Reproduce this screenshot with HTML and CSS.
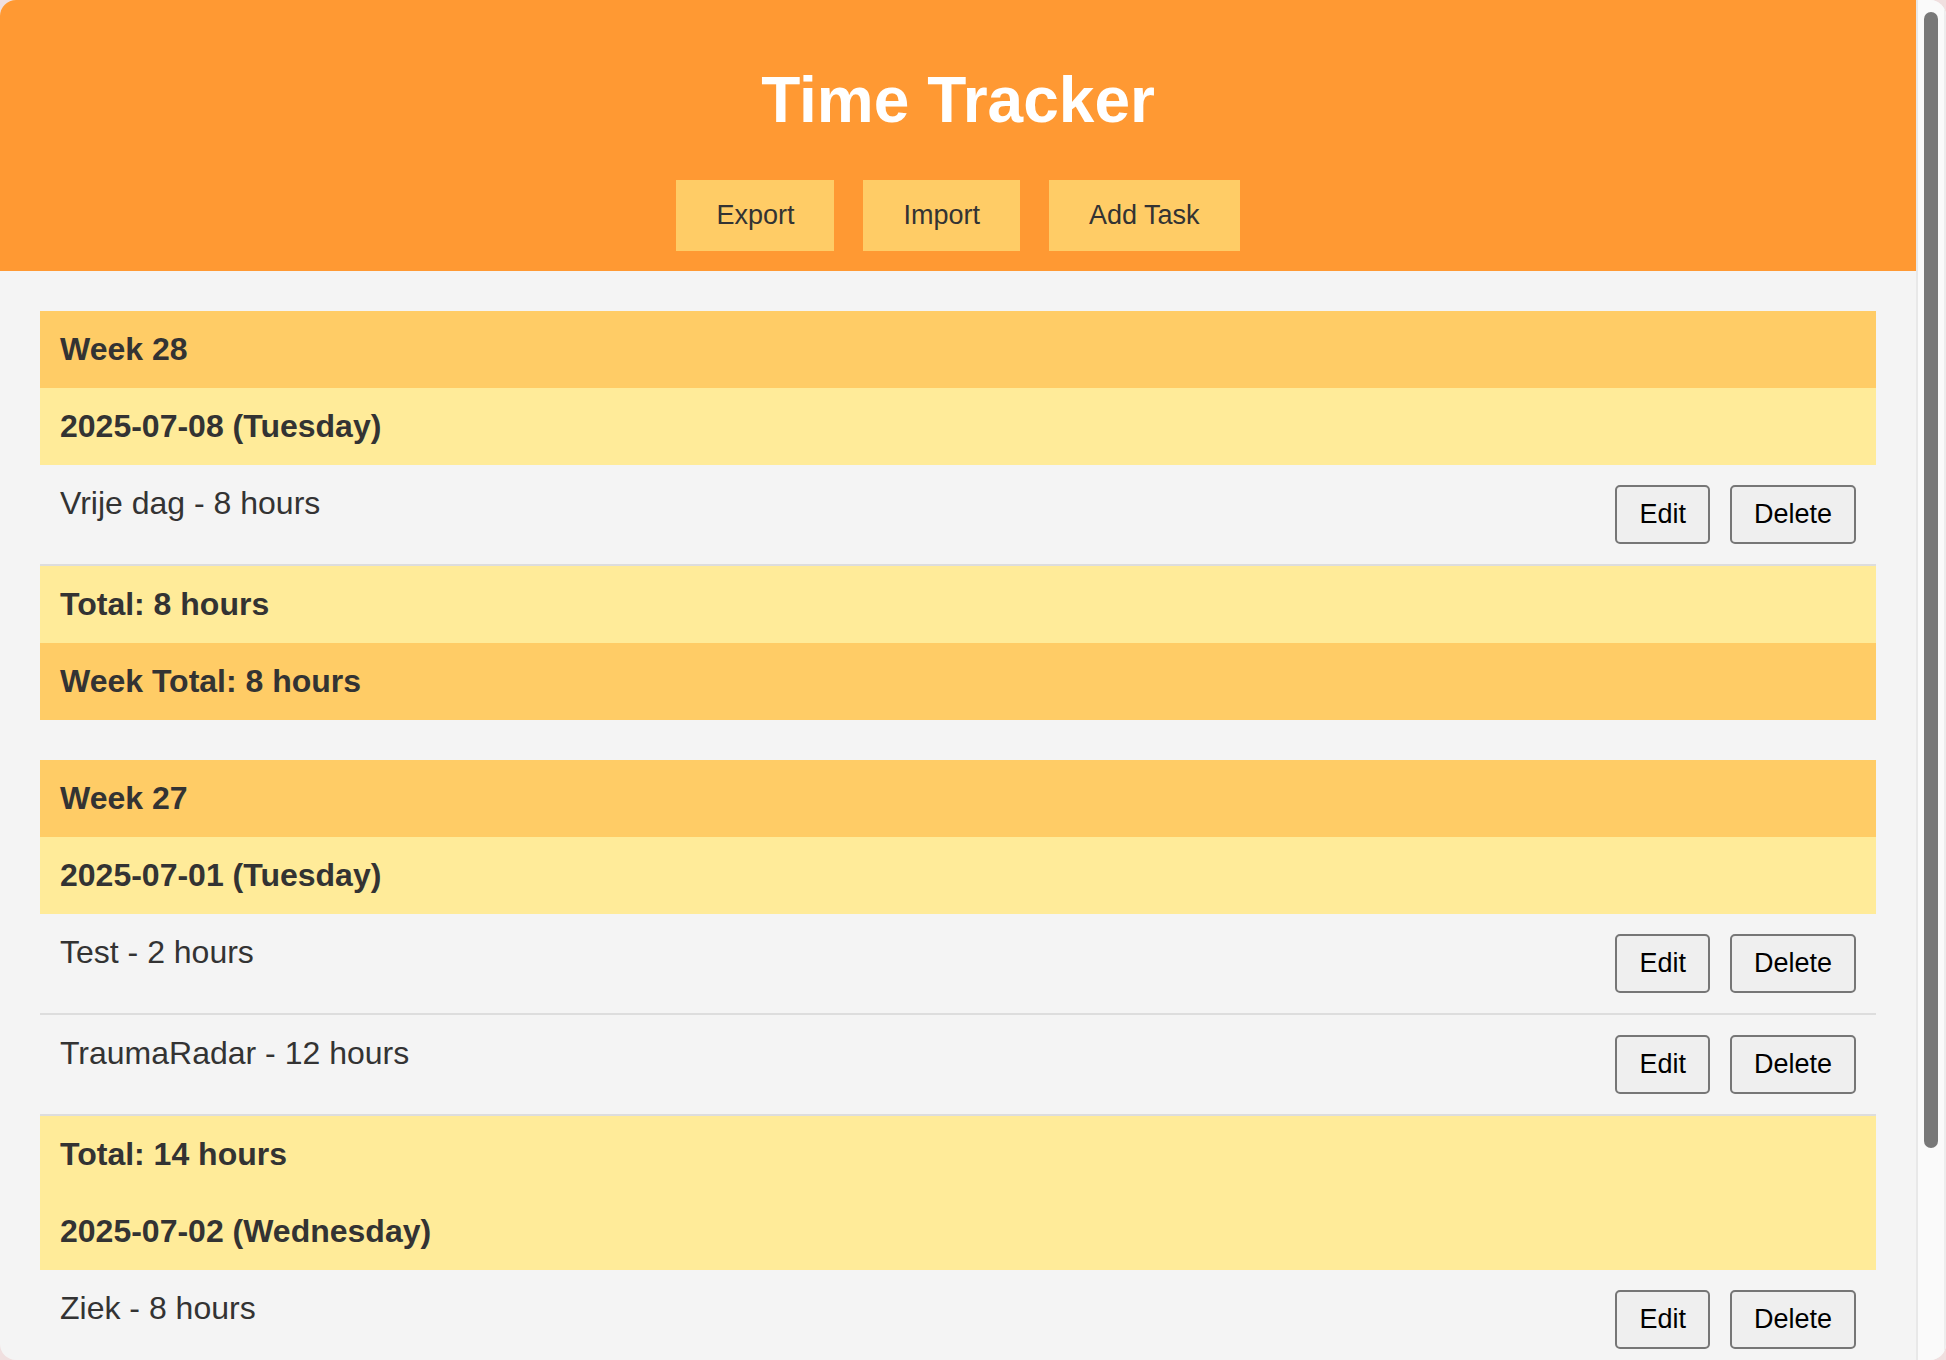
FILE: index.html
```html
<!DOCTYPE html>
<html lang="en">
<head>
  <meta charset="utf-8">
  <title>Time Tracker</title>
  <link rel="stylesheet" href="styles.css">
</head>
<body>
  <div class="window">
    <div class="page">
      <header class="header">
        <h1 class="title">Time Tracker</h1>
        <div class="toolbar">
          <button class="tool-button" type="button">Export</button>
          <button class="tool-button" type="button">Import</button>
          <button class="tool-button" type="button">Add Task</button>
        </div>
      </header>
      <main class="content">
        <section class="week">
          <div class="row week-row">Week 28</div>
          <div class="row day-row">2025-07-08 (Tuesday)</div>
          <div class="row task-row">
            <span>Vrije dag - 8 hours</span>
            <div class="task-actions">
              <button class="task-button" type="button">Edit</button>
              <button class="task-button" type="button">Delete</button>
            </div>
          </div>
          <div class="row day-row">Total: 8 hours</div>
          <div class="row week-row">Week Total: 8 hours</div>
        </section>
        <section class="week">
          <div class="row week-row">Week 27</div>
          <div class="row day-row">2025-07-01 (Tuesday)</div>
          <div class="row task-row">
            <span>Test - 2 hours</span>
            <div class="task-actions">
              <button class="task-button" type="button">Edit</button>
              <button class="task-button" type="button">Delete</button>
            </div>
          </div>
          <div class="row task-row">
            <span>TraumaRadar - 12 hours</span>
            <div class="task-actions">
              <button class="task-button" type="button">Edit</button>
              <button class="task-button" type="button">Delete</button>
            </div>
          </div>
          <div class="row day-row">Total: 14 hours</div>
          <div class="row day-row">2025-07-02 (Wednesday)</div>
          <div class="row task-row">
            <span>Ziek - 8 hours</span>
            <div class="task-actions">
              <button class="task-button" type="button">Edit</button>
              <button class="task-button" type="button">Delete</button>
            </div>
          </div>
        </section>
      </main>
    </div>
    <div class="scroll-track" aria-hidden="true">
      <div class="scroll-thumb"></div>
    </div>
  </div>
</body>
</html>
```
FILE: styles.css
```css
* {
  box-sizing: border-box;
}

body {
  margin: 0;
  background: #f0dfdf;
  color: #333;
  font-family: Arial, "Liberation Sans", sans-serif;
  font-size: 32px;
  line-height: 37px;
}

.window {
  display: flex;
  height: 100vh;
  overflow: hidden;
  border-radius: 16px;
  background: #f4f4f4;
}

.page {
  flex: 1;
  min-width: 0;
  overflow-y: auto;
  scrollbar-width: none;
}

.header {
  padding: 20px;
  background: #ff9933;
  text-align: center;
}

.title {
  margin: 43px 0;
  color: #fff;
  font-size: 64px;
  line-height: 74px;
}

.toolbar {
  display: flex;
  justify-content: center;
  gap: 29px;
}

.tool-button,
.task-button {
  font-family: inherit;
  font-size: 27px;
  line-height: 31px;
  cursor: pointer;
}

.tool-button {
  padding: 20px 40px;
  border: 0;
  background: #ffcc66;
  color: #333;
}

.content {
  display: flex;
  flex-direction: column;
  gap: 40px;
  padding: 40px;
}

.row {
  padding: 20px;
}

.week-row {
  background: #ffcc66;
  font-weight: bold;
}

.day-row {
  background: #ffeb99;
  font-weight: bold;
}

.task-row {
  display: flex;
  justify-content: space-between;
  align-items: flex-start;
  border-bottom: 2px solid #ddd;
}

.task-actions {
  display: flex;
  gap: 20px;
}

.task-button {
  padding: 12px 22px;
  border: 2px solid #767676;
  border-radius: 5px;
  background: #efefef;
  color: #000;
}

.scroll-track {
  flex: none;
  width: 30px;
  padding: 12px 6px;
  border-right: 2px solid #ededed;
  border-left: 2px solid #e8e8e8;
  background: #fafafa;
}

.scroll-thumb {
  width: 14px;
  height: 85%;
  border-radius: 7px;
  background: #787878;
}
```
